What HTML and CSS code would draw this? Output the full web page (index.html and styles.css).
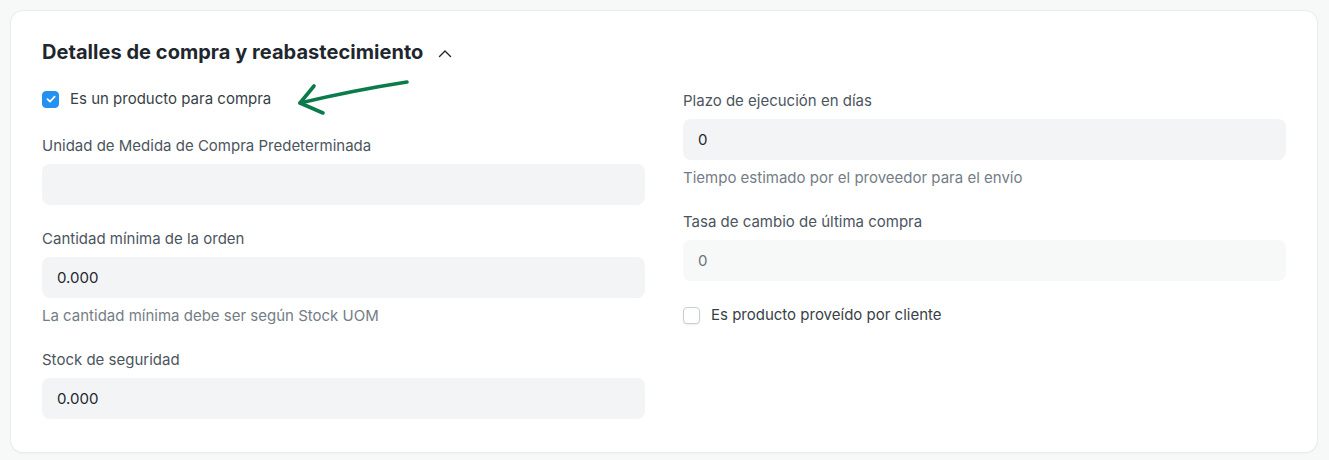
FILE: index.html
```html
<!DOCTYPE html>
<html lang="es">
<head>
<meta charset="utf-8">
<title>Detalles de compra</title>
<link rel="stylesheet" href="styles.css">
</head>
<body>
<div class="card">
  <div class="section-head">
    <h2 class="section-title">Detalles de compra y reabastecimiento</h2>
    <svg class="chevron" width="16" height="16" viewBox="0 0 16 16" fill="none"><path d="M2.5 10.5 L8 5 L13.5 10.5" stroke="#1f272e" stroke-width="1.4" stroke-linecap="round" stroke-linejoin="round"/></svg>
  </div>
  <div class="cols">
    <div class="col">
      <div class="check-row first">
        <span class="box checked"><svg width="12" height="12" viewBox="0 0 12 12" fill="none"><path d="M2.5 6.2 L5 8.6 L9.6 3.6" stroke="#fff" stroke-width="1.8" stroke-linecap="round" stroke-linejoin="round"/></svg></span>
        <span class="check-label">Es un producto para compra</span>
      </div>
      <div class="field">
        <div class="label">Unidad de Medida de Compra Predeterminada</div>
        <div class="input"></div>
      </div>
      <div class="field">
        <div class="label">Cantidad mínima de la orden</div>
        <div class="input">0.000</div>
        <div class="help">La cantidad mínima debe ser según Stock UOM</div>
      </div>
      <div class="field last">
        <div class="label">Stock de seguridad</div>
        <div class="input">0.000</div>
      </div>
    </div>
    <div class="col right">
      <div class="field">
        <div class="label">Plazo de ejecución en días</div>
        <div class="input">0</div>
        <div class="help">Tiempo estimado por el proveedor para el envío</div>
      </div>
      <div class="field">
        <div class="label">Tasa de cambio de última compra</div>
        <div class="input readonly">0</div>
      </div>
      <div class="check-row">
        <span class="box"></span>
        <span class="check-label">Es producto proveído por cliente</span>
      </div>
    </div>
  </div>
  <svg class="arrow" width="150" height="70" viewBox="0 0 150 70" fill="none">
    <path d="M127 22 Q75 30 20 43" stroke="#0b7b4b" stroke-width="3.6" stroke-linecap="round"/>
    <path d="M34 26 L20 43 L43 53" stroke="#0b7b4b" stroke-width="3.6" stroke-linecap="round" stroke-linejoin="round"/>
  </svg>
</div>
</body>
</html>
```
FILE: styles.css
```css
html, body {
  margin: 0;
  padding: 0;
}
body {
  background: #f7f8f8;
  font-family: Inter, "Noto Sans", sans-serif;
  color: #1f272e;
  padding: 11px 12px 8px 11px;
}
.card {
  position: relative;
  background: #ffffff;
  border-radius: 12px;
  box-shadow: 0 0 0 1px #e9ebec, 0 1px 3px rgba(0,0,0,0.06);
  padding: 24px 31px 33px 31px;
  height: 441px;
  box-sizing: border-box;
}
.section-head {
  display: flex;
  align-items: center;
  gap: 14px;
  height: 34px;
}
.section-title {
  margin: 0;
  font-size: 20px;
  font-weight: 700;
  line-height: 30px;
  color: #1f272e;
  letter-spacing: 0.04px;
}
.chevron {
  display: block;
  margin-top: 3px;
}
.cols {
  display: grid;
  grid-template-columns: 603px 603px;
  column-gap: 38px;
  margin-top: 20px;
}
.col.right {
  padding-top: 2px;
}
.check-row {
  display: flex;
  align-items: center;
  gap: 11px;
  height: 20px;
}
.check-row.first {
  margin-bottom: 27px;
}
.box {
  width: 17px;
  height: 17px;
  box-sizing: border-box;
  border-radius: 4px;
  border: 1px solid #c9cfd4;
  background: #fff;
  box-shadow: 0 1px 2px rgba(0,0,0,0.08);
  display: flex;
  align-items: center;
  justify-content: center;
}
.box.checked {
  background: #2490ef;
  border-color: #2490ef;
  box-shadow: none;
}
.check-label {
  font-size: 15px;
  line-height: 20px;
  color: #383f46;
}
.field {
  margin-bottom: 24px;
}
.field.last {
  margin-bottom: 0;
}
.label {
  font-size: 15px;
  line-height: 20px;
  color: #4c555d;
  margin-bottom: 8px;
}
.input {
  height: 41px;
  box-sizing: border-box;
  background: #f3f4f5;
  border-radius: 8px;
  padding: 0 15px;
  display: flex;
  align-items: center;
  font-size: 15px;
  color: #1f272e;
}
.input.readonly {
  background: #f7f8f8;
  color: #6b747c;
}
.help {
  margin-top: 8px;
  font-size: 15px;
  line-height: 20px;
  color: #747d86;
}
.arrow {
  position: absolute;
  left: 269px;
  top: 49px;
}
```
